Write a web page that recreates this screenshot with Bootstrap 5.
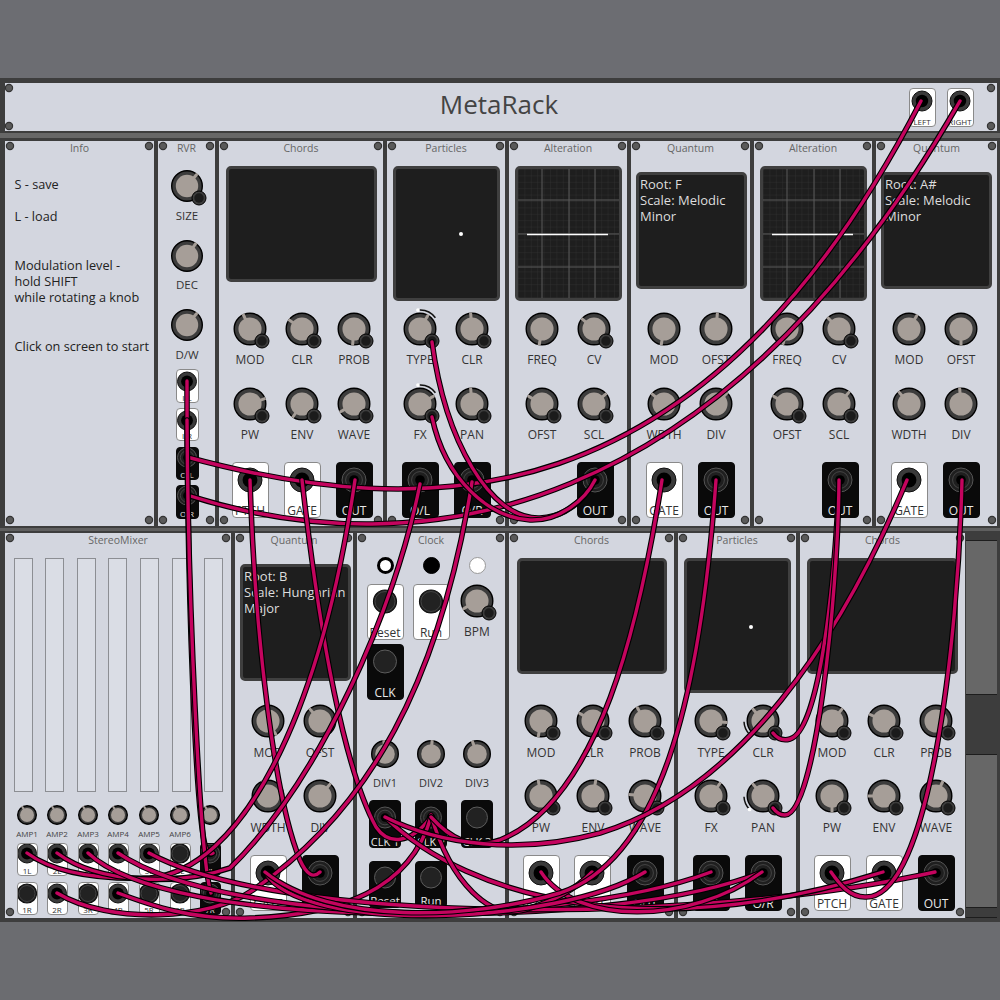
<!DOCTYPE html>
<html lang="en">
<head>
<meta charset="utf-8">
<title>MetaRack</title>
<link href="https://cdn.jsdelivr.net/npm/bootstrap@5.3.0/dist/css/bootstrap.min.css" rel="stylesheet">
<style>
html,body{width:1000px;height:1000px;overflow:hidden;margin:0;background:#6b6c70;font-family:"Open Sans",sans-serif;color:#333}
.stage{width:1000px;height:1000px}
.sky{height:78px;background:#6c6d72}
.rackbox{height:844px;background:#3d3d3d;padding:5px 3px 0 5px}
.rail{height:5px;background:#676767;margin:2px -3px 3px -5px}
.rail2{height:3px;background:#5f5f5f;margin:2px -3px 2px -5px}
.hrow-a{height:48px;background:#d3d6df}
.hrow{height:385px;gap:4px}
.panel{background:#d3d6df;flex:none}
.hrow .panel{height:100%}
.ttl{font-size:10.5px;color:#666;line-height:14px;top:0;left:0;right:0}
.scr{position:absolute;background:#1e1e1e;border:3px solid #3f3f3f;border-radius:5px;color:#ddd;font-size:13px;line-height:16px;padding:1px 0 0 0;overflow:hidden}
.scr-txt{padding-left:1px}
.lbl{position:absolute;transform:translate(-50%,-50%);white-space:nowrap;line-height:1;color:#333}
.info{font-size:12.7px;line-height:16px;color:#222;white-space:nowrap}
.tile{position:absolute;border-radius:4px;border:1px solid #8a8a8a;background:#fff;text-align:center;overflow:hidden}
.tile.dark{background:#0a0a0a;border-color:#0a0a0a;color:#eee}
.tile span{position:absolute;left:0;right:0;bottom:-1px;line-height:1.2;color:#333;white-space:nowrap}
.tile.dark span{color:#e8e8e8}
.tile svg{position:absolute;left:50%;transform:translateX(-50%)}
.fad{position:absolute;background:#dadde5;border:1px solid #8c8e93}
.led{position:absolute;border-radius:50%}
.fillcol{width:31px;height:100%;flex:none;margin-left:-3px}
.fillcol div{background:#3d3d3d;border-bottom:1px solid #1d1d1d}
.fg1{background:#676767!important}
.wires{position:absolute;left:0;top:0;pointer-events:none}
</style>
</head>
<body>
<div class="stage position-relative">
  <div class="sky"></div>
  <div class="rackbox">
    <div class="panel hrow-a position-relative d-flex align-items-center justify-content-center" id="topm"></div>
    <div class="rail"></div>
    <div class="hrow d-flex" id="row1"></div>
    <div class="rail2"></div>
    <div class="hrow d-flex" id="row2"></div>
  </div>
  <svg class="wires" id="wires" width="1000" height="1000" viewBox="0 0 1000 1000"></svg>
</div>
<script src="https://cdn.jsdelivr.net/npm/bootstrap@5.3.0/dist/js/bootstrap.bundle.min.js"></script>
<script>
const el=(tag,cls,parent,css,txt)=>{const e=document.createElement(tag);if(cls)e.className=cls;if(css)e.style.cssText=css;if(txt!==undefined)e.textContent=txt;if(parent)parent.appendChild(e);return e};
const svgBox=(parent,s,css,inner)=>{const w=document.createElement('div');w.innerHTML='<svg width="'+s+'" height="'+s+'" viewBox="'+(-s/2)+' '+(-s/2)+' '+s+' '+s+'" style="'+css+'">'+inner+'</svg>';const n=w.firstChild;parent.appendChild(n);return n};
function screw(m,x,y){svgBox(m.e,10,'position:absolute;left:'+(x-m.x-5)+'px;top:'+(y-m.y-5)+'px','<circle r="3.6" fill="#5a5a5a" stroke="#333" stroke-width="1.2"/>')}
function mod(rowEl,x,y,w,h,title){const e=el('div','panel position-relative',rowEl,'width:'+w+'px');const m={e,x,y,w,h};
 screw(m,x+5,y+5);screw(m,x+w-5,y+5);screw(m,x+5,y+h-6);screw(m,x+w-5,y+h-6);
 if(title)el('div','ttl position-absolute text-center',e,'',title);return m}
function lab(m,x,y,t,fs,col){el('div','lbl',m.e,'left:'+(x-m.x)+'px;top:'+(y-m.y)+'px;font-size:'+(fs||12)+'px'+(col?';color:'+col:''),t)}
function knob(m,x,y,ang,r,hasMod,arc){
 const a=(ang-90)*Math.PI/180,R=r,d=R*0.7;const mx=(R*Math.cos(a)).toFixed(1),my=(R*Math.sin(a)).toFixed(1);
 const ix=(d*.85*Math.cos(a)).toFixed(1),iy=(d*.85*Math.sin(a)).toFixed(1);
 let s='<circle r="'+(R-.7)+'" fill="#3c3c3c" stroke="#000" stroke-width="1.4"/><circle r="'+d+'" fill="#a69e98"/><line x1="'+ix+'" y1="'+iy+'" x2="'+mx+'" y2="'+my+'" stroke="#a69e98" stroke-width="'+(R>12?3:2)+'"/>';
 if(arc){const pt=g=>{const q=(g-90)*Math.PI/180;return (19*Math.cos(q)).toFixed(1)+' '+(19*Math.sin(q)).toFixed(1)};
  s+='<path d="M'+pt(arc[0])+' A19 19 0 0 1 '+pt(arc[1])+'" fill="none" stroke="#111" stroke-width="1.5"/><circle cx="'+pt(arc[0]).split(' ')[0]+'" cy="'+pt(arc[0]).split(' ')[1]+'" r="1.9" fill="#fff"/>'}
 if(hasMod)s+='<circle cx="12" cy="12" r="7" fill="#3c3c3c" stroke="#000" stroke-width="1"/><circle cx="12" cy="12" r="4.7" fill="#1b1b1b"/>';
 svgBox(m.e,56,'position:absolute;left:'+(x-m.x-28)+'px;top:'+(y-m.y-28)+'px;overflow:visible',s);
}
function jackSvg(jr,dark,occ){
 if(dark)return occ?'<circle r="'+jr+'" fill="#1f1f1f" stroke="#555" stroke-width="1"/><circle r="'+(jr*.7)+'" fill="none" stroke="#444" stroke-width="1"/><circle r="'+(jr*.4)+'" fill="#000"/>'
  :'<circle r="'+jr+'" fill="#222" stroke="#5c5c5c" stroke-width="1"/>';
 return occ?'<circle r="'+jr+'" fill="#3a3a3a" stroke="#111" stroke-width="1"/><circle r="'+(jr*.62)+'" fill="#000"/>'
  :'<circle r="'+jr+'" fill="#222" stroke="#111" stroke-width="1.2"/><circle r="'+(jr-1.5)+'" fill="none" stroke="#4a4a4a" stroke-width=".8"/>';
}
function tile(m,cx,top,w,h,cy,jr,txt,dark,occ,fs){
 const t=el('div','tile'+(dark?' dark':''),m.e,'left:'+(cx-w/2-m.x)+'px;top:'+(top-m.y)+'px;width:'+w+'px;height:'+h+'px');
 const s=2*jr+4;svgBox(t,s,'top:'+(cy-top-1-s/2)+'px',jackSvg(jr,dark,occ));
 if(txt)el('span','',t,'font-size:'+(fs||12)+'px',txt);
}
function scr(m,x1,y1,x2,y2,lines){const s=el('div','scr',m.e,'left:'+(x1-m.x)+'px;top:'+(y1-m.y)+'px;width:'+(x2-x1)+'px;height:'+(y2-y1)+'px');
 if(lines)lines.forEach(l=>el('div','scr-txt',s,'',l));return s}
function knobs(m,list,labY,hasMod){list.forEach(k=>{knob(m,k[0],k[1],k[3],16.5,k[4]!==undefined?k[4]:hasMod,k[5]);lab(m,k[0],labY,k[2])})}
const big=(m,x,top,txt,dark,occ)=>tile(m,x,top,37,56,top+18,12,txt,dark,occ);

/* top module */
const topm=document.getElementById('topm');
const T={e:topm,x:5,y:83};
el('div','',topm,'font-size:26px;color:#444;line-height:1;margin-top:-7px;margin-right:4px','MetaRack');
[[9,88],[9,126],[991,88],[991,126]].forEach(p=>screw(T,p[0],p[1]));
tile(T,922,88,27,39,101,10,'LEFT',false,true,8);
tile(T,960,88,27,39,101,10,'RIGHT',false,true,8);

/* row 1 */
const r1=document.getElementById('row1'),Y1=141,H=385;
const info=mod(r1,5,Y1,149,H,'Info');
[['S - save',184],['L - load',216],['Modulation level -',265],['hold SHIFT',281],['while rotating a knob',297],['Click on screen to start',346]].forEach(l=>el('div','info position-absolute',info.e,'left:9.5px;top:'+(l[1]-8-Y1)+'px',l[0]));

const rvr=mod(r1,158,Y1,57,H,'RVR');
knob(rvr,187,186,40,16,true);lab(rvr,187,216,'SIZE',11.5);
knob(rvr,187,256,35,16,false);lab(rvr,187,285,'DEC',11.5);
knob(rvr,187,325,40,16,false);lab(rvr,187,355,'D/W',11.5);
tile(rvr,187,369,23,34,381,9.5,'I/L',false,true,8);
tile(rvr,187,408,23,33,420,9.5,'I/R',false,true,8);
tile(rvr,187,447,23,33,457,9.5,'O/L',true,true,8);
tile(rvr,187,485,23,34,495,9.5,'O/R',true,true,8);

function chords(row,x,y,w,xs,ang,sx,dl){
 const m=mod(row,x,y,w,H,'Chords');
 scr(m,x+sx[0],y+25,x+w-sx[1],y+141);
 knobs(m,[[xs[0],y+188,'MOD',ang[0]],[xs[1],y+188,'CLR',ang[1]],[xs[2],y+188,'PROB',ang[2]]],y+219+dl,true);
 knobs(m,[[xs[0],y+263,'PW',ang[3]],[xs[1],y+263,'ENV',ang[4]],[xs[2],y+263,'WAVE',ang[5]]],y+294+dl,true);
 return m}
const c1=chords(r1,219,Y1,164,[250,302,354],[-25,-55,185,70,215,240],[7,6],0);
big(c1,250,Y1+321,'PTCH',false,true);big(c1,302,Y1+321,'GATE',false,true);big(c1,354,Y1+321,'OUT',true,true);

function particles(row,x,y,xs,dot,a,topArc,dl){
 const m=mod(row,x,y,118,H,'Particles');
 const s=scr(m,x+6,y+25,x+113,y+160);
 el('div','led',s,'left:'+dot[0]+'px;top:'+dot[1]+'px;width:4px;height:4px;background:#fff');
 knobs(m,[[xs[0],y+188,'TYPE',a[0],true,topArc[0]],[xs[1],y+188,'CLR',a[1],true,topArc[1]]],y+219+dl);
 knobs(m,[[xs[0],y+263,'FX',a[2],true,topArc[2]],[xs[1],y+263,'PAN',a[3],true,topArc[3]]],y+294+dl);
 big(m,xs[0],y+321+dl,'O/L',true,true);big(m,xs[1],y+321+dl,'O/R',true,true);
 return m}
particles(r1,387,Y1,[420,472],[63,63],[30,-5,60,-5],[[-6,54],0,[-6,54],0],0);

function alteration(x,a){
 const m=mod(r1,x,Y1,118,H,'Alteration');
 const s=scr(m,x+6,Y1+25,x+113,Y1+160);
 s.innerHTML='<svg width="101" height="129" style="position:absolute;left:0;top:0"><defs><pattern id="g'+x+'" width="6.4" height="6.4" patternUnits="userSpaceOnUse"><path d="M6.4 0H0V6.4" fill="none" stroke="#333" stroke-width=".7"/></pattern></defs><rect width="101" height="129" fill="url(#g'+x+')"/><g stroke="#5a5a5a" stroke-width="1"><path d="M24 0V129M51 0V129M77 0V129M0 31H101M0 65H101M0 98H101"/></g><path d="M9 65.5H90" stroke="#fff" stroke-width="1.6"/></svg>';
 knobs(m,[[x+33,Y1+188,'FREQ',a[0],false],[x+85,Y1+188,'CV',a[1],true]],Y1+219);
 knobs(m,[[x+33,Y1+263,'OFST',a[2],true],[x+85,Y1+263,'SCL',a[3],true]],Y1+294);
 big(m,x+86,Y1+321,'OUT',true,true);
 return m}
function quantum(row,x,y,w,lines,a,dl){
 const m=mod(row,x,y,w,H,'Quantum');
 scr(m,x+5,y+31,x+116,y+148,lines);
 knobs(m,[[x+33,y+188,'MOD',a[0],false],[x+85,y+188,'OFST',a[1],false]],y+219+dl);
 knobs(m,[[x+33,y+263,'WDTH',a[2],false],[x+85,y+263,'DIV',a[3],false]],y+294+dl);
 big(m,x+33,y+321+dl,'GATE',false,true);big(m,x+85,y+321+dl,'OUT',true,true);
 return m}
alteration(509,[190,-50,-60,50]);
quantum(r1,631,Y1,119,['Root: F','Scale: Melodic','Minor'],[190,5,-50,45],0);
alteration(754,[195,-45,-60,40]);
quantum(r1,876,Y1,121,['Root: A#','Scale: Melodic','Minor'],[30,180,-40,-5],0);

/* row 2 */
const r2=document.getElementById('row2'),Y2=533;
const sm=mod(r2,5,Y2,226,H,'StereoMixer');
[14,45,77,108,140,172,204].forEach(x=>el('div','fad',sm.e,'left:'+(x-5)+'px;top:'+(558-Y2)+'px;width:19px;height:234px'));
const cols=[27,57,88,118,149,180,210],occL=[1,1,1,1,1,0,1],occR=[0,1,0,1,0,0,1];
cols.forEach((x,i)=>{
 const dk=i==6,n=i+1;
 knob(sm,x,815,-30,10,false);
 if(i<6)lab(sm,x,833.5,'AMP'+n,8,'#444');
 tile(sm,x,843,21,33,853,9.5,n+'L',dk,!!occL[i],8);
 tile(sm,x,882,21,33,893,9.5,n+'R',dk,!!occR[i],8);
});
quantum(r2,235,Y2,118,['Root: B','Scale: Hungarian','Major'],[150,-40,-20,40],1);

const ck=mod(r2,357,Y2,148,H,'Clock');
[[385,'#fff','3.5px solid #000'],[431,'#000','1px solid #000'],[477,'#fff','1px solid #999']].forEach(l=>el('div','led',ck.e,'left:'+(l[0]-8.5-357)+'px;top:'+(565-8.5-Y2)+'px;width:17px;height:17px;background:'+l[1]+';border:'+l[2]));
tile(ck,385,584,37,56,601,11.5,'Reset',false,false);
tile(ck,431,584,37,56,601,11.5,'Run',false,false);
knob(ck,477,601,-120,16.5,true);lab(ck,477,632,'BPM');
tile(ck,385,644,37,56,661,11.5,'CLK',true,false);
[[385,-5,'DIV1'],[431,5,'DIV2'],[477,-20,'DIV3']].forEach(d=>{knob(ck,d[0],754,d[1],14,false);lab(ck,d[0],782,d[2],11)});
[[385,'CLK 1',1],[431,'CLK 2',1],[477,'CLK 3',0]].forEach(d=>tile(ck,d[0],800,32,48,817,10.5,d[1],true,!!d[2],11));
tile(ck,385,861,32,47,877,10.5,'Reset',true,false,11.5);
tile(ck,431,861,32,47,877,10.5,'Run',true,false,11.5);

const c2=chords(r2,509,Y2,165,[541,593,645],[190,-60,-30,-10,10,-85],[8,7],1);
big(c2,541,Y2+322,'PTCH',false,true);big(c2,592,Y2+322,'GATE',false,true);big(c2,645,Y2+322,'OUT',true,true);
particles(r2,678,Y2,[711,763],[62,64],[95,-40,35,-40],[0,[-135,-92],0,[-135,-92]],1);
const c3=chords(r2,800,Y2,165,[832,884,936],[40,-65,30,180,-90,25],[7,7],1);
big(c3,832,Y2+322,'PTCH',false,true);big(c3,884,Y2+322,'GATE',false,true);big(c3,936,Y2+322,'OUT',true,true);

const fc=el('div','fillcol d-flex flex-column',r2);
[[8,''],[154,'fg1'],[60,''],[153,'fg1'],[10,'']].forEach(b=>el('div',b[1],fc,'height:'+b[0]+'px'));

/* cables */
const cables=[
'M187 457C420 520,700 530,921 101',
'M187 495C420 570,720 520,960 101',
'M187 381C187 600,196 810,205 845Q208 856 213 853',
'M187 420C188 600,200 860,211 893',
'M250 480C255 640,275 800,300 860Q310 882 320 872',
'M302 480C320 640,345 770,376 827C388 845,410 845,431 817',
'M355 480C320 720,240 870,150 878C90 880,50 870,27 853',
'M420 484C395 610,320 780,230 868C180 885,100 885,57 853',
'M472 482C440 680,370 810,253 890C210 920,110 925,57 893',
'M431 817C410 890,340 915,250 918C190 920,150 905,118 893',
'M88 853C170 930,560 930,711 872',
'M118 853C230 930,620 930,762 872',
'M149 853C280 925,700 925,935 872',
'M385 817C470 900,650 945,883 872',
'M541 872C575 925,690 925,762 872',
'M431 815C450 880,490 925,530 908C555 900,575 890,592 872',
'M265 872C300 935,560 925,645 872',
'M716 480C700 700,660 860,560 893C470 920,330 925,265 872',
'M662 480C640 620,600 800,500 840C470 850,450 838,431 817',
'M907 480C840 640,740 790,600 833C520 855,440 845,385 817',
'M839 480C835 580,820 730,790 739Q780 742 773 733',
'M839 480C838 600,815 815,785 815Q778 815 773 808',
'M962 480C958 640,930 900,865 897C850 897,840 885,831 872',
'M432 342C445 440,490 520,540 518C565 517,585 500,595 480',
'M432 417C445 480,490 518,530 520C560 521,585 500,595 480'
];
document.getElementById('wires').innerHTML=cables.map(d=>'<path d="'+d+'" fill="none" stroke="#000" stroke-width="5.6" stroke-linecap="round"/><path d="'+d+'" fill="none" stroke="#c4045e" stroke-width="3.4" stroke-linecap="round"/>').join('');
</script>
</body>
</html>
